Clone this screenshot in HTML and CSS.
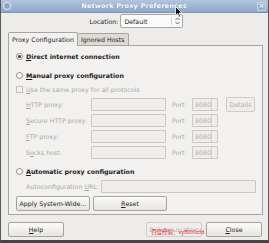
FILE: index.html
```html
<!DOCTYPE html>
<html lang="en">
<head>
    <meta charset="UTF-8">
    <title>Network Proxy Preferences</title>
    <link rel="stylesheet" href="styles.css">
</head>
<body>
    <div class="window">
        <div class="titlebar">
            <span class="tb-icon"></span>
            <span class="title">Network Proxy Preferences</span>
            <span class="tb-close">×</span>
        </div>
        <div class="content">
            <div class="location">
                <span class="loc-label">Location:</span>
                <div class="combo">
                    <span>Default</span>
                    <span class="combo-arrows">
                        <svg width="5" height="8" viewBox="0 0 5 8"><path d="M0.5 3 L2.5 1 L4.5 3 M0.5 5 L2.5 7 L4.5 5" fill="none" stroke="#555" stroke-width="0.9"/></svg>
                    </span>
                </div>
            </div>

            <div class="tabs">
                <div class="tab active">Proxy Configuration</div>
                <div class="tab">Ignored Hosts</div>
            </div>

            <div class="panel">
                <div class="option">
                    <span class="radio checked"></span>
                    <span class="strong"><u>D</u>irect internet connection</span>
                </div>
                <div class="option manual">
                    <span class="radio"></span>
                    <span class="strong"><u>M</u>anual proxy configuration</span>
                </div>
                <div class="check-row">
                    <span class="checkbox"></span>
                    <span class="dim"><u>U</u>se the same proxy for all protocols</span>
                </div>

                <div class="proxy-row first">
                    <span class="row-label dim"><u>H</u>TTP proxy:</span>
                    <span class="entry host"></span>
                    <span class="port-label dim">Port:</span>
                    <span class="spin">8080<span class="spin-arrows"></span></span>
                    <span class="btn small disabled">Details</span>
                </div>
                <div class="proxy-row">
                    <span class="row-label dim"><u>S</u>ecure HTTP proxy:</span>
                    <span class="entry host"></span>
                    <span class="port-label dim">Port:</span>
                    <span class="spin">8080<span class="spin-arrows"></span></span>
                </div>
                <div class="proxy-row">
                    <span class="row-label dim"><u>F</u>TP proxy:</span>
                    <span class="entry host"></span>
                    <span class="port-label dim">Port:</span>
                    <span class="spin">8080<span class="spin-arrows"></span></span>
                </div>
                <div class="proxy-row">
                    <span class="row-label dim">S<u>o</u>cks host:</span>
                    <span class="entry host"></span>
                    <span class="port-label dim">Port:</span>
                    <span class="spin">8080<span class="spin-arrows"></span></span>
                </div>

                <div class="option auto">
                    <span class="radio"></span>
                    <span class="strong"><u>A</u>utomatic proxy configuration</span>
                </div>
                <div class="proxy-row url-row">
                    <span class="row-label dim">Autoconfiguration <u>U</u>RL:</span>
                    <span class="entry url"></span>
                </div>

                <div class="panel-buttons">
                    <span class="btn wide">Apply System-Wide...</span>
                    <span class="btn wide"><u>R</u>eset</span>
                </div>
            </div>

            <div class="footer">
                <span class="btn foot"><u>H</u>elp</span>
                <span class="spacer"></span>
                <span class="btn foot disabled">Delete Location</span>
                <span class="btn foot"><u>C</u>lose</span>
            </div>
        </div>

        <span class="watermark">百度经验：vy8000cfd</span>
        <svg class="cursor" width="8" height="12" viewBox="0 0 8 12"><path d="M0.5 0.5 L0.5 9.5 L2.6 7.6 L4.2 11.2 L5.6 10.6 L4.1 7.1 L7 7.1 Z" fill="#111" stroke="#fff" stroke-width="0.8"/></svg>
    </div>
</body>
</html>
```

FILE: styles.css
```css
body {
    margin: 0;
    padding: 0;
    font-family: 'DejaVu Sans', sans-serif;
    font-size: 6.3px;
    color: #222;
    background: #3d3d3d;
}

.window {
    position: relative;
    width: 267px;
    height: 240px;
    border-left: 1px solid #5a5a5a;
    border-right: 1px solid #5a5a5a;
    border-bottom: 3px solid #444;
    background: #edecea;
    display: flex;
    flex-direction: column;
    overflow: hidden;
}

.titlebar {
    height: 12px;
    flex-shrink: 0;
    display: flex;
    align-items: center;
    padding: 0 2px;
    background: linear-gradient(#b3c6df, #8ea8cb);
    border-bottom: 1px solid #7c93b5;
}

.tb-icon {
    width: 6px;
    height: 6px;
    border-radius: 50%;
    border: 1px solid #eef2f8;
    background: #8aa2c4;
}

.title {
    flex: 1;
    text-align: center;
    color: #fff;
    font-weight: bold;
    font-size: 6.6px;
    letter-spacing: 0.15px;
    text-shadow: 0 0 1px #5d7aa3;
}

.tb-close {
    width: 7px;
    height: 7px;
    line-height: 7px;
    text-align: center;
    color: #fff;
    font-size: 7px;
    border: 1px solid #c9d6e8;
    border-radius: 1px;
}

.content {
    flex: 1;
    display: flex;
    flex-direction: column;
    padding: 0 5px 0 7px;
}

.content > * {
    flex-shrink: 0;
}

.location {
    display: flex;
    justify-content: center;
    align-items: center;
    gap: 2px;
    margin-top: 1px;
    height: 14px;
    padding-left: 2px;
}

.combo {
    width: 56px;
    height: 12px;
    display: flex;
    align-items: center;
    justify-content: space-between;
    padding: 0 2px 0 3px;
    background: #fafafa;
    border: 1px solid #a9a6a0;
    border-radius: 2px;
}

.combo-arrows {
    display: flex;
    padding-left: 3px;
    border-left: 1px solid #d5d2cc;
}

.tabs {
    display: flex;
    align-items: flex-end;
    margin-top: 3px;
    height: 14px;
}

.tab {
    height: 11px;
    line-height: 11px;
    padding: 0 3px;
    background: #dedbd6;
    border: 1px solid #a8a5a0;
    border-bottom: none;
    border-left: none;
    border-radius: 2px 2px 0 0;
}

.tab.active {
    height: 13px;
    line-height: 13px;
    background: #f2f1f0;
    border-left: 1px solid #a8a5a0;
    position: relative;
    top: 1px;
}

.panel {
    height: 163px;
    border: 1px solid #a8a5a0;
    background: #f2f1f0;
    padding: 5px 6px 0 7px;
    display: flex;
    flex-direction: column;
}

.panel > * {
    flex-shrink: 0;
}

.option {
    display: flex;
    align-items: center;
    gap: 3px;
    height: 10px;
}

.option.manual {
    margin-top: 9px;
}

.option.auto {
    margin-top: 7px;
}

.strong {
    font-weight: bold;
    color: #1b1b1b;
}

.dim {
    color: #a9a7a3;
}

.radio {
    width: 5px;
    height: 5px;
    border-radius: 50%;
    border: 1px solid #8d8a85;
    background: #fff;
    position: relative;
}

.radio.checked::after {
    content: "";
    position: absolute;
    left: 1px;
    top: 1px;
    width: 3px;
    height: 3px;
    border-radius: 50%;
    background: #333;
}

.check-row {
    display: flex;
    align-items: center;
    gap: 3px;
    height: 10px;
    margin-top: 4px;
}

.checkbox {
    width: 5px;
    height: 5px;
    border: 1px solid #c3c0bb;
    background: #f4f3f2;
}

.proxy-row {
    display: flex;
    align-items: center;
    height: 13px;
    margin-top: 3px;
    padding-left: 10px;
}

.proxy-row.first {
    margin-top: 4px;
}

.row-label {
    width: 65px;
}

.entry {
    height: 11px;
    background: #efeeec;
    border: 1px solid #cbc8c3;
    border-radius: 1px;
}

.entry.host {
    width: 73px;
}

.entry.url {
    width: 153px;
}

.url-row {
    margin-top: 4px;
}

.url-row .row-label {
    width: 75px;
}

.port-label {
    margin-left: 6px;
    width: 20px;
}

.spin {
    position: relative;
    width: 22px;
    height: 11px;
    line-height: 11px;
    padding-left: 2px;
    color: #b3b1ad;
    background: #efeeec;
    border: 1px solid #cbc8c3;
    border-radius: 1px;
}

.spin-arrows {
    position: absolute;
    right: 0;
    top: 0;
    width: 5px;
    height: 11px;
    border-left: 1px solid #d3d0cb;
}

.btn {
    display: flex;
    align-items: center;
    justify-content: center;
    height: 13px;
    border: 1px solid #a7a49e;
    border-radius: 2px;
    background: linear-gradient(#fbfbfa, #e6e4e0);
    color: #222;
}

.btn.disabled {
    color: #b0aeaa;
    border-color: #cfccc7;
    background: #efeeec;
}

.btn.small {
    width: 27px;
    margin-left: 8px;
}

.panel-buttons {
    display: flex;
    gap: 3px;
    margin-top: 3px;
}

.btn.wide {
    width: 72px;
}

.footer {
    display: flex;
    align-items: center;
    gap: 4px;
    margin-top: 7px;
    padding-right: 1px;
}

.spacer {
    flex: 1;
}

.btn.foot {
    width: 54px;
}

.watermark {
    position: absolute;
    left: 150px;
    top: 229px;
    font-family: 'Noto Sans CJK SC', sans-serif;
    font-size: 5.5px;
    line-height: 6px;
    color: #e2232a;
}

.cursor {
    position: absolute;
    left: 174px;
    top: 6px;
}
```
